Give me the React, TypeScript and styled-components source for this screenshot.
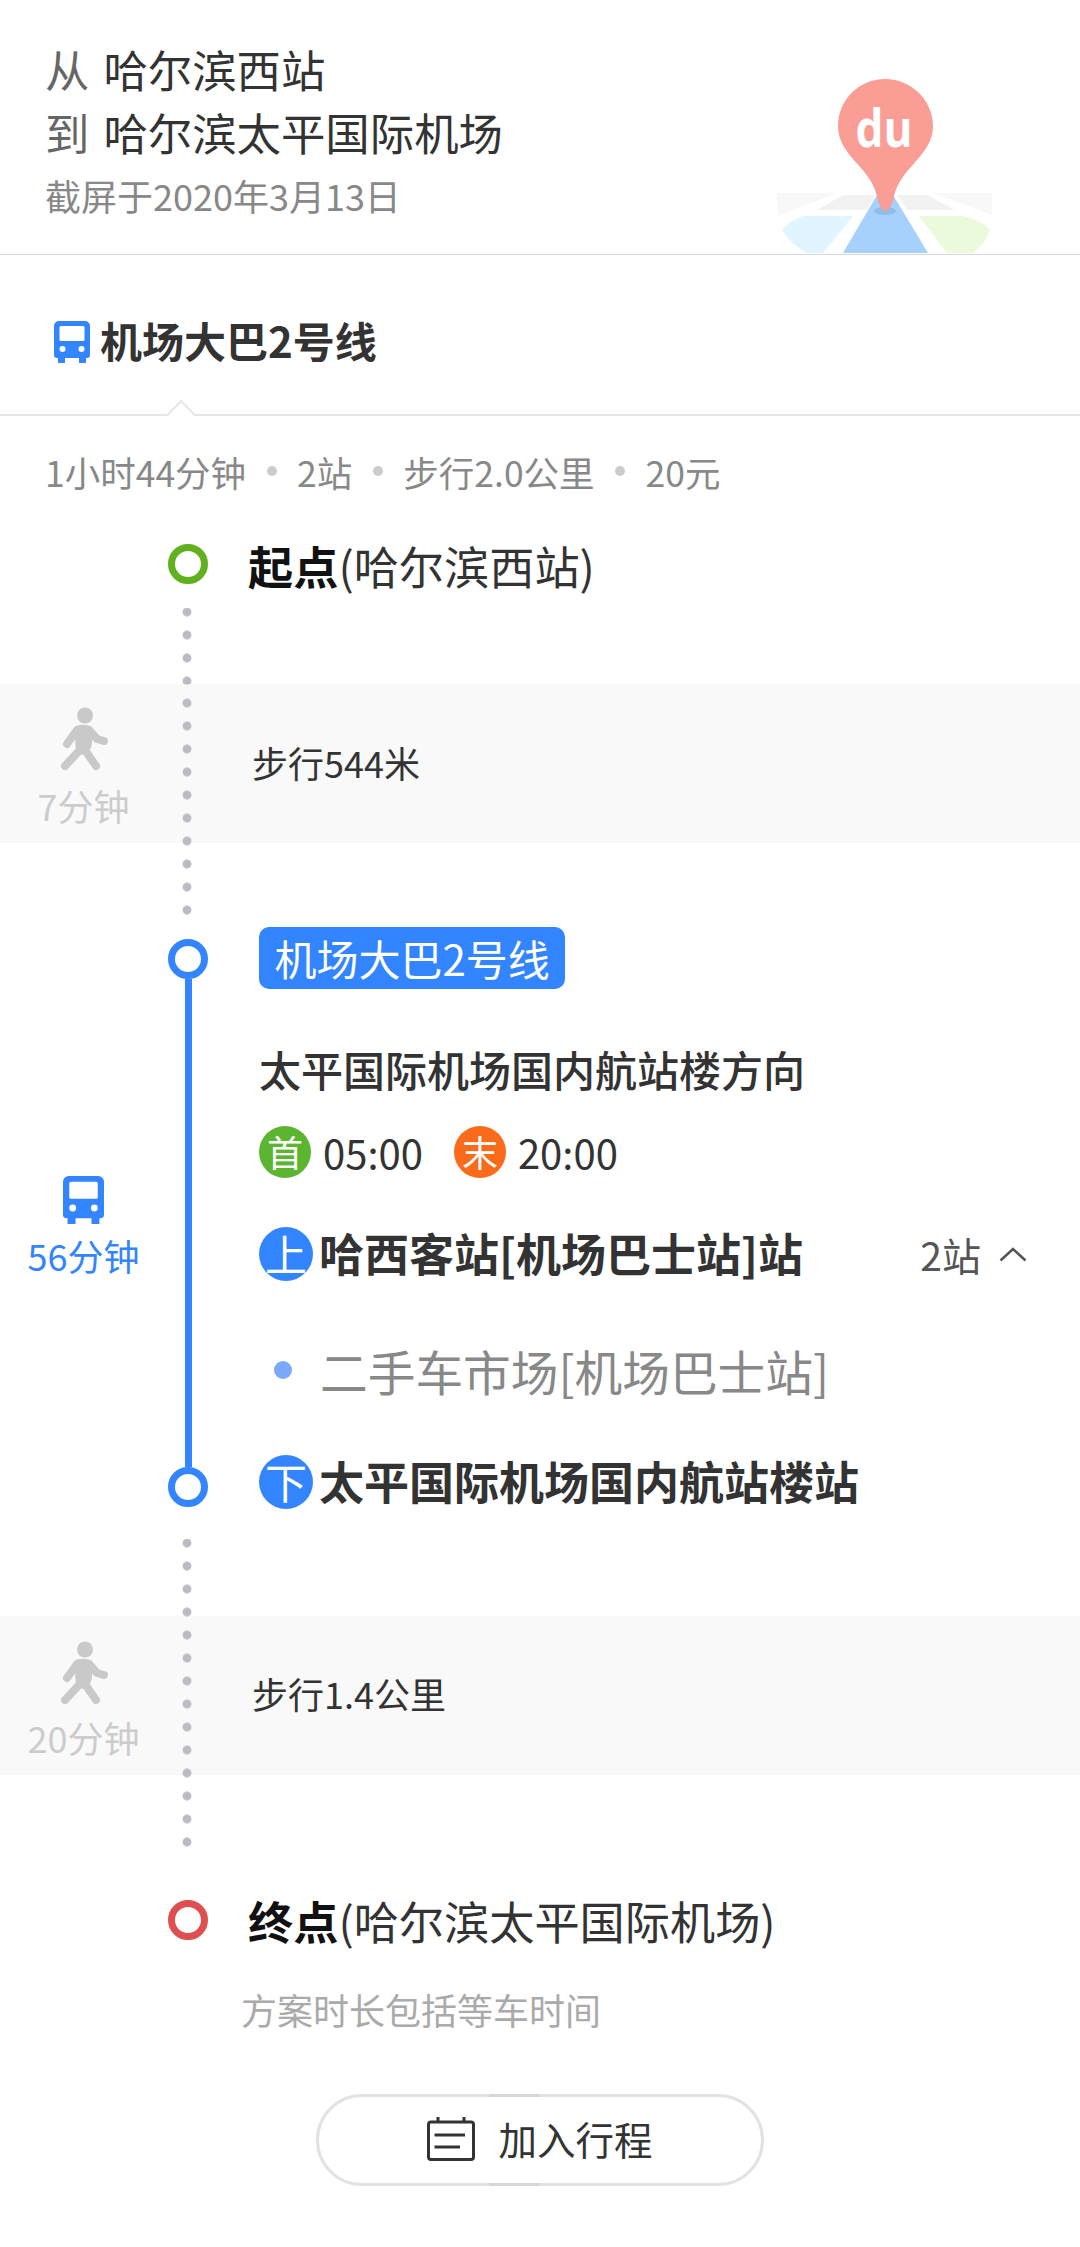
import React from "react";
import styled, { createGlobalStyle } from "styled-components";

const Global = createGlobalStyle`
  html, body { margin: 0; padding: 0; background: #fff; }
  body { font-family: "Noto Sans CJK SC", "Noto Sans", sans-serif; }
  #root { width: 1080px; min-height: 2247px; }
`;

const Page = styled.div`
  width: 1080px;
  height: 2247px;
  overflow: hidden;
  background: #fff;
`;

const Header = styled.header`
  position: relative;
  box-sizing: border-box;
  height: 255px;
  padding: 37px 0 0 45px;
  border-bottom: 1px solid #d8d8d8;
`;

const RouteLine = styled.div`
  font-size: 44.4px;
  line-height: 63px;
  color: #333;
  white-space: nowrap;
`;

const RouteWord = styled.span`
  color: #666;
  margin-right: 14px;
`;

const ShotDate = styled.div`
  margin-top: 7px;
  font-size: 36px;
  line-height: 50px;
  color: #888;
`;

const LogoArt = styled.svg`
  position: absolute;
  left: 777px;
  top: 79px;
`;

const TitleBar = styled.div`
  position: relative;
  box-sizing: border-box;
  height: 161px;
  display: flex;
  align-items: center;
  padding: 10px 0 0 54px;
  gap: 10px;
  border-bottom: 2px solid #e6e6e6;
  font-size: 42px;
  font-weight: 700;
  color: #333;
  & > svg {
    margin-top: 4px;
  }
  &::before {
    content: "";
    position: absolute;
    left: 171px;
    bottom: -10px;
    width: 18px;
    height: 18px;
    transform: rotate(45deg);
    background: #fff;
    border-top: 2px solid #e6e6e6;
    border-left: 2px solid #e6e6e6;
  }
`;

const Summary = styled.div`
  box-sizing: border-box;
  height: 128px;
  padding: 30px 0 0 45px;
  display: flex;
  align-items: flex-start;
  gap: 20.5px;
  font-size: 35.5px;
  line-height: 52px;
  color: #888;
`;

const Sep = styled.span`
  width: 10px;
  height: 10px;
  margin-top: 20px;
  border-radius: 50%;
  background: #ccc;
`;

const Row = styled.section<{ $h: number; $band?: boolean }>`
  display: grid;
  grid-template-columns: 168px 40px 1fr;
  height: ${(p) => p.$h}px;
  background: ${(p) => (p.$band ? "#f9f9f9" : "transparent")};
`;

const TimeCell = styled.div<{ $top: number }>`
  display: flex;
  flex-direction: column;
  align-items: center;
  padding: ${(p) => p.$top}px 0 0 0;
  width: 167px;
`;

const TimeText = styled.div<{ $color: string; $top: number }>`
  margin-top: ${(p) => p.$top}px;
  font-size: 36px;
  line-height: 44px;
  color: ${(p) => p.$color};
  white-space: nowrap;
`;

const Rail = styled.div`
  display: flex;
  flex-direction: column;
  align-items: center;
  height: 100%;
`;

const Ring = styled.div<{ $color: string }>`
  box-sizing: border-box;
  flex: none;
  width: 40px;
  height: 40px;
  border-radius: 50%;
  background: #fff;
  border: 7px solid ${(p) => p.$color};
`;

const Dots = styled.div<{ $h?: number; $first: number; $before?: number; $after?: number }>`
  width: 10px;
  margin: ${(p) => p.$before ?? 0}px 3px ${(p) => p.$after ?? 0}px 0;
  flex: ${(p) => (p.$h ? `none` : `1`)};
  height: ${(p) => (p.$h ? `${p.$h}px` : "auto")};
  background-image: radial-gradient(circle at 5px 11.5px, #b9bcc2 0, #b9bcc2 4px, transparent 4.8px);
  background-size: 10px 23px;
  background-position: 0 ${(p) => p.$first - 11.5}px;
  background-repeat: repeat-y;
`;

const BlueLine = styled.div`
  flex: 1;
  width: 7px;
  background: #3385ff;
`;

const Body = styled.div`
  display: flex;
  flex-direction: column;
  align-items: flex-start;
`;

const Endpoint = styled.div<{ $top?: number }>`
  margin: ${(p) => p.$top ?? 0}px 0 0 40px;
  font-size: 45.2px;
  line-height: 44px;
  color: #333;
  white-space: nowrap;
  b {
    font-weight: 700;
    color: #111;
  }
`;

const WalkText = styled.div<{ $top: number }>`
  margin: ${(p) => p.$top}px 0 0 44px;
  font-size: 36px;
  line-height: 50px;
  color: #333;
`;

const LineTag = styled.div`
  box-sizing: border-box;
  height: 62px;
  margin: 84px 0 0 51px;
  padding: 0 15.5px;
  border-radius: 10px;
  background: #3385ff;
  color: #fff;
  font-size: 42px;
  line-height: 62px;
  white-space: nowrap;
`;

const Direction = styled.div`
  margin: 50px 0 0 51px;
  font-size: 42px;
  line-height: 60px;
  font-weight: 500;
  color: #333;
  white-space: nowrap;
`;

const Hours = styled.div`
  display: flex;
  align-items: center;
  height: 52px;
  margin: 27px 0 0 51px;
  font-size: 40px;
  color: #333;
`;

const HourBadge = styled.span<{ $color: string; $gap?: number }>`
  flex: none;
  width: 52px;
  height: 52px;
  margin: 0 12px 0 ${(p) => p.$gap ?? 0}px;
  border-radius: 50%;
  background: ${(p) => p.$color};
  color: #fff;
  font-size: 36px;
  line-height: 50px;
  text-align: center;
`;

const StopRow = styled.div<{ $top: number }>`
  display: flex;
  align-items: center;
  width: 768px;
  height: 54px;
  margin: ${(p) => p.$top}px 0 0 51px;
`;

const StopBadge = styled.span`
  flex: none;
  width: 54px;
  height: 54px;
  margin-right: 6px;
  border-radius: 50%;
  background: #3385ff;
  color: #fff;
  font-size: 42px;
  line-height: 52px;
  text-align: center;
`;

const StopName = styled.span`
  margin-bottom: 3px;
  font-size: 45px;
  font-weight: 700;
  color: #333;
  white-space: nowrap;
`;

const StopCount = styled.span`
  margin-left: auto;
  display: flex;
  align-items: center;
  gap: 18px;
  font-size: 39px;
  color: #555;
`;

const PassRow = styled.div`
  display: flex;
  align-items: center;
  height: 60px;
  margin: 59px 0 0 66px;
`;

const PassDot = styled.span`
  flex: none;
  width: 18px;
  height: 18px;
  margin-right: 28px;
  border-radius: 50%;
  background: #7aa9fa;
`;

const PassName = styled.span`
  font-size: 47.7px;
  color: #888;
  white-space: nowrap;
`;

const Note = styled.div`
  margin: -3px 0 0 241px;
  font-size: 36px;
  line-height: 50px;
  color: #aaa;
`;

const ActionWrap = styled.div`
  display: flex;
  margin: 60px 0 0 316px;
`;

const ActionButton = styled.div`
  position: relative;
  box-sizing: border-box;
  display: flex;
  align-items: center;
  justify-content: center;
  gap: 23px;
  width: 448px;
  height: 92px;
  padding-bottom: 4px;
  border: 3px solid #e2e2e2;
  border-radius: 46px;
  font-size: 38.5px;
  color: #333;
  &::before,
  &::after {
    content: "";
    position: absolute;
    left: 170px;
    width: 50px;
    height: 3px;
    background: #d4d8d4;
  }
  &::before { top: -3px; }
  &::after { bottom: -3px; }
`;

const Bus = ({ w = 41, h = 48 }: { w?: number; h?: number }) => (
  <svg width={w} height={h} viewBox="0 0 36 42">
    <path d="M5 0h26a5 5 0 0 1 5 5v29a3 3 0 0 1-3 3h-1v5h-7v-5H11v5H4v-5H3a3 3 0 0 1-3-3V5a5 5 0 0 1 5-5z" fill="#3385ff" />
    <rect x="5.5" y="5" width="25" height="15" rx="1.5" fill="#fff" />
    <circle cx="8.5" cy="28" r="3" fill="#fff" />
    <circle cx="27.5" cy="28" r="3" fill="#fff" />
  </svg>
);

const Walker = () => (
  <svg width="50" height="68" viewBox="0 0 50 68" fill="none" stroke="#c9c9c9" strokeLinecap="round" strokeLinejoin="round">
    <circle cx="26" cy="11.5" r="8" fill="#c9c9c9" stroke="none" />
    <path d="M17 22 Q26 19 33 23 L33 40 Q31 48 27 51 L18 50 Q15 40 17 22Z" fill="#c9c9c9" stroke="none" />
    <path d="M18 26 L8 40" strokeWidth="8" />
    <path d="M30 26 L38 35 L45 37" strokeWidth="8" />
    <path d="M20 47 L6 62" strokeWidth="8" />
    <path d="M26 46 L37 62" strokeWidth="8" />
  </svg>
);

const Logo = () => (
  <LogoArt width="216" height="175" viewBox="0 0 216 175">
    <polygon points="0,114 60,114 1,137" fill="#f8f8f8" />
    <polygon points="156,114 215,114 215,136" fill="#f8f8f8" />
    <polygon points="40,131 66,116 98,116 90,131" fill="#f2f2f2" />
    <polygon points="120,116 150,116 178,131 130,131" fill="#f2f2f2" />
    <path d="M5 151 Q12 142 26 137 H76 L46 174 H30 Q14 166 5 151Z" fill="#e0f5ff" />
    <path d="M213 151 Q206 142 186 137 H142 L170 174 H196 Q208 166 213 151Z" fill="#ebfadb" />
    <polygon points="100,116 116,116 151,174 66,174" fill="#a6d1fd" />
    <ellipse cx="108" cy="132" rx="11" ry="4" fill="#8fbce8" />
    <path d="M108 0 C82 0 61 21 61 47 C61 78 96 88 101 122 Q108 142 116 122 C121 88 156 78 156 47 C156 21 134 0 108 0Z" fill="#f99d95" />
    <text x="107" y="68" textAnchor="middle" fontFamily="'Open Sans', sans-serif" fontWeight="700" fontSize="52" textLength="57" lengthAdjust="spacingAndGlyphs" fill="#fff">du</text>
  </LogoArt>
);

const Calendar = () => (
  <svg width="48" height="45" viewBox="0 0 48 45" fill="none" stroke="#333" strokeWidth="3">
    <rect x="1.5" y="6" width="45" height="37.5" rx="2.5" />
    <path d="M11 1v5M37 1v5" />
    <path d="M7.5 19H38M7.5 31H33" />
  </svg>
);

const Chevron = () => (
  <svg width="28" height="15" viewBox="0 0 28 15" fill="none" stroke="#555" strokeWidth="2.5">
    <path d="M1.5 13.5L14 2l12.5 11.5" />
  </svg>
);

export default function App() {
  return (
    <Page>
      <Global />
      <Header>
        <RouteLine><RouteWord>从</RouteWord>哈尔滨西站</RouteLine>
        <RouteLine><RouteWord>到</RouteWord>哈尔滨太平国际机场</RouteLine>
        <ShotDate>截屏于2020年3月13日</ShotDate>
        <Logo />
      </Header>
      <TitleBar>
        <Bus w={36} h={42} />
        <span>机场大巴2号线</span>
      </TitleBar>
      <Summary>
        <span>1小时44分钟</span><Sep />
        <span>2站</span><Sep />
        <span>步行2.0公里</span><Sep />
        <span>20元</span>
      </Summary>

      <Row $h={140}>
        <div />
        <Rail>
          <Ring $color="#61b01e" />
          <Dots $before={24} $first={4} />
        </Rail>
        <Body><Endpoint><b>起点</b>(哈尔滨西站)</Endpoint></Body>
      </Row>

      <Row $h={159} $band>
        <TimeCell $top={20}>
          <Walker />
          <TimeText $color="#ccc" $top={11}>7分钟</TimeText>
        </TimeCell>
        <Rail><Dots $first={19} /></Rail>
        <Body><WalkText $top={53}>步行544米</WalkText></Body>
      </Row>

      <Row $h={773}>
        <TimeCell $top={333}>
          <Bus />
          <TimeText $color="#3385ff" $top={9}>56分钟</TimeText>
        </TimeCell>
        <Rail>
          <Dots $h={72} $after={24} $first={-2} />
          <Ring $color="#3385ff" />
          <BlueLine />
          <Ring $color="#3385ff" />
          <Dots $h={77} $before={32} $first={4} />
        </Rail>
        <Body>
          <LineTag>机场大巴2号线</LineTag>
          <Direction>太平国际机场国内航站楼方向</Direction>
          <Hours>
            <HourBadge $color="#5cb531">首</HourBadge>05:00
            <HourBadge $color="#f96a1a" $gap={31}>末</HourBadge>20:00
          </Hours>
          <StopRow $top={49}>
            <StopBadge>上</StopBadge>
            <StopName>哈西客站[机场巴士站]站</StopName>
            <StopCount>2站<Chevron /></StopCount>
          </StopRow>
          <PassRow>
            <PassDot />
            <PassName>二手车市场[机场巴士站]</PassName>
          </PassRow>
          <StopRow $top={55}>
            <StopBadge>下</StopBadge>
            <StopName>太平国际机场国内航站楼站</StopName>
          </StopRow>
        </Body>
      </Row>

      <Row $h={159} $band>
        <TimeCell $top={22}>
          <Walker />
          <TimeText $color="#ccc" $top={9}>20分钟</TimeText>
        </TimeCell>
        <Rail><Dots $first={19} /></Rail>
        <Body><WalkText $top={52}>步行1.4公里</WalkText></Body>
      </Row>

      <Row $h={212}>
        <div />
        <Rail>
          <Dots $h={73} $after={52} $first={-2} />
          <Ring $color="#e04f4f" />
        </Rail>
        <Body><Endpoint $top={124}><b>终点</b>(哈尔滨太平国际机场)</Endpoint></Body>
      </Row>

      <Note>方案时长包括等车时间</Note>
      <ActionWrap>
        <ActionButton>
          <Calendar />
          <span>加入行程</span>
        </ActionButton>
      </ActionWrap>
    </Page>
  );
}
